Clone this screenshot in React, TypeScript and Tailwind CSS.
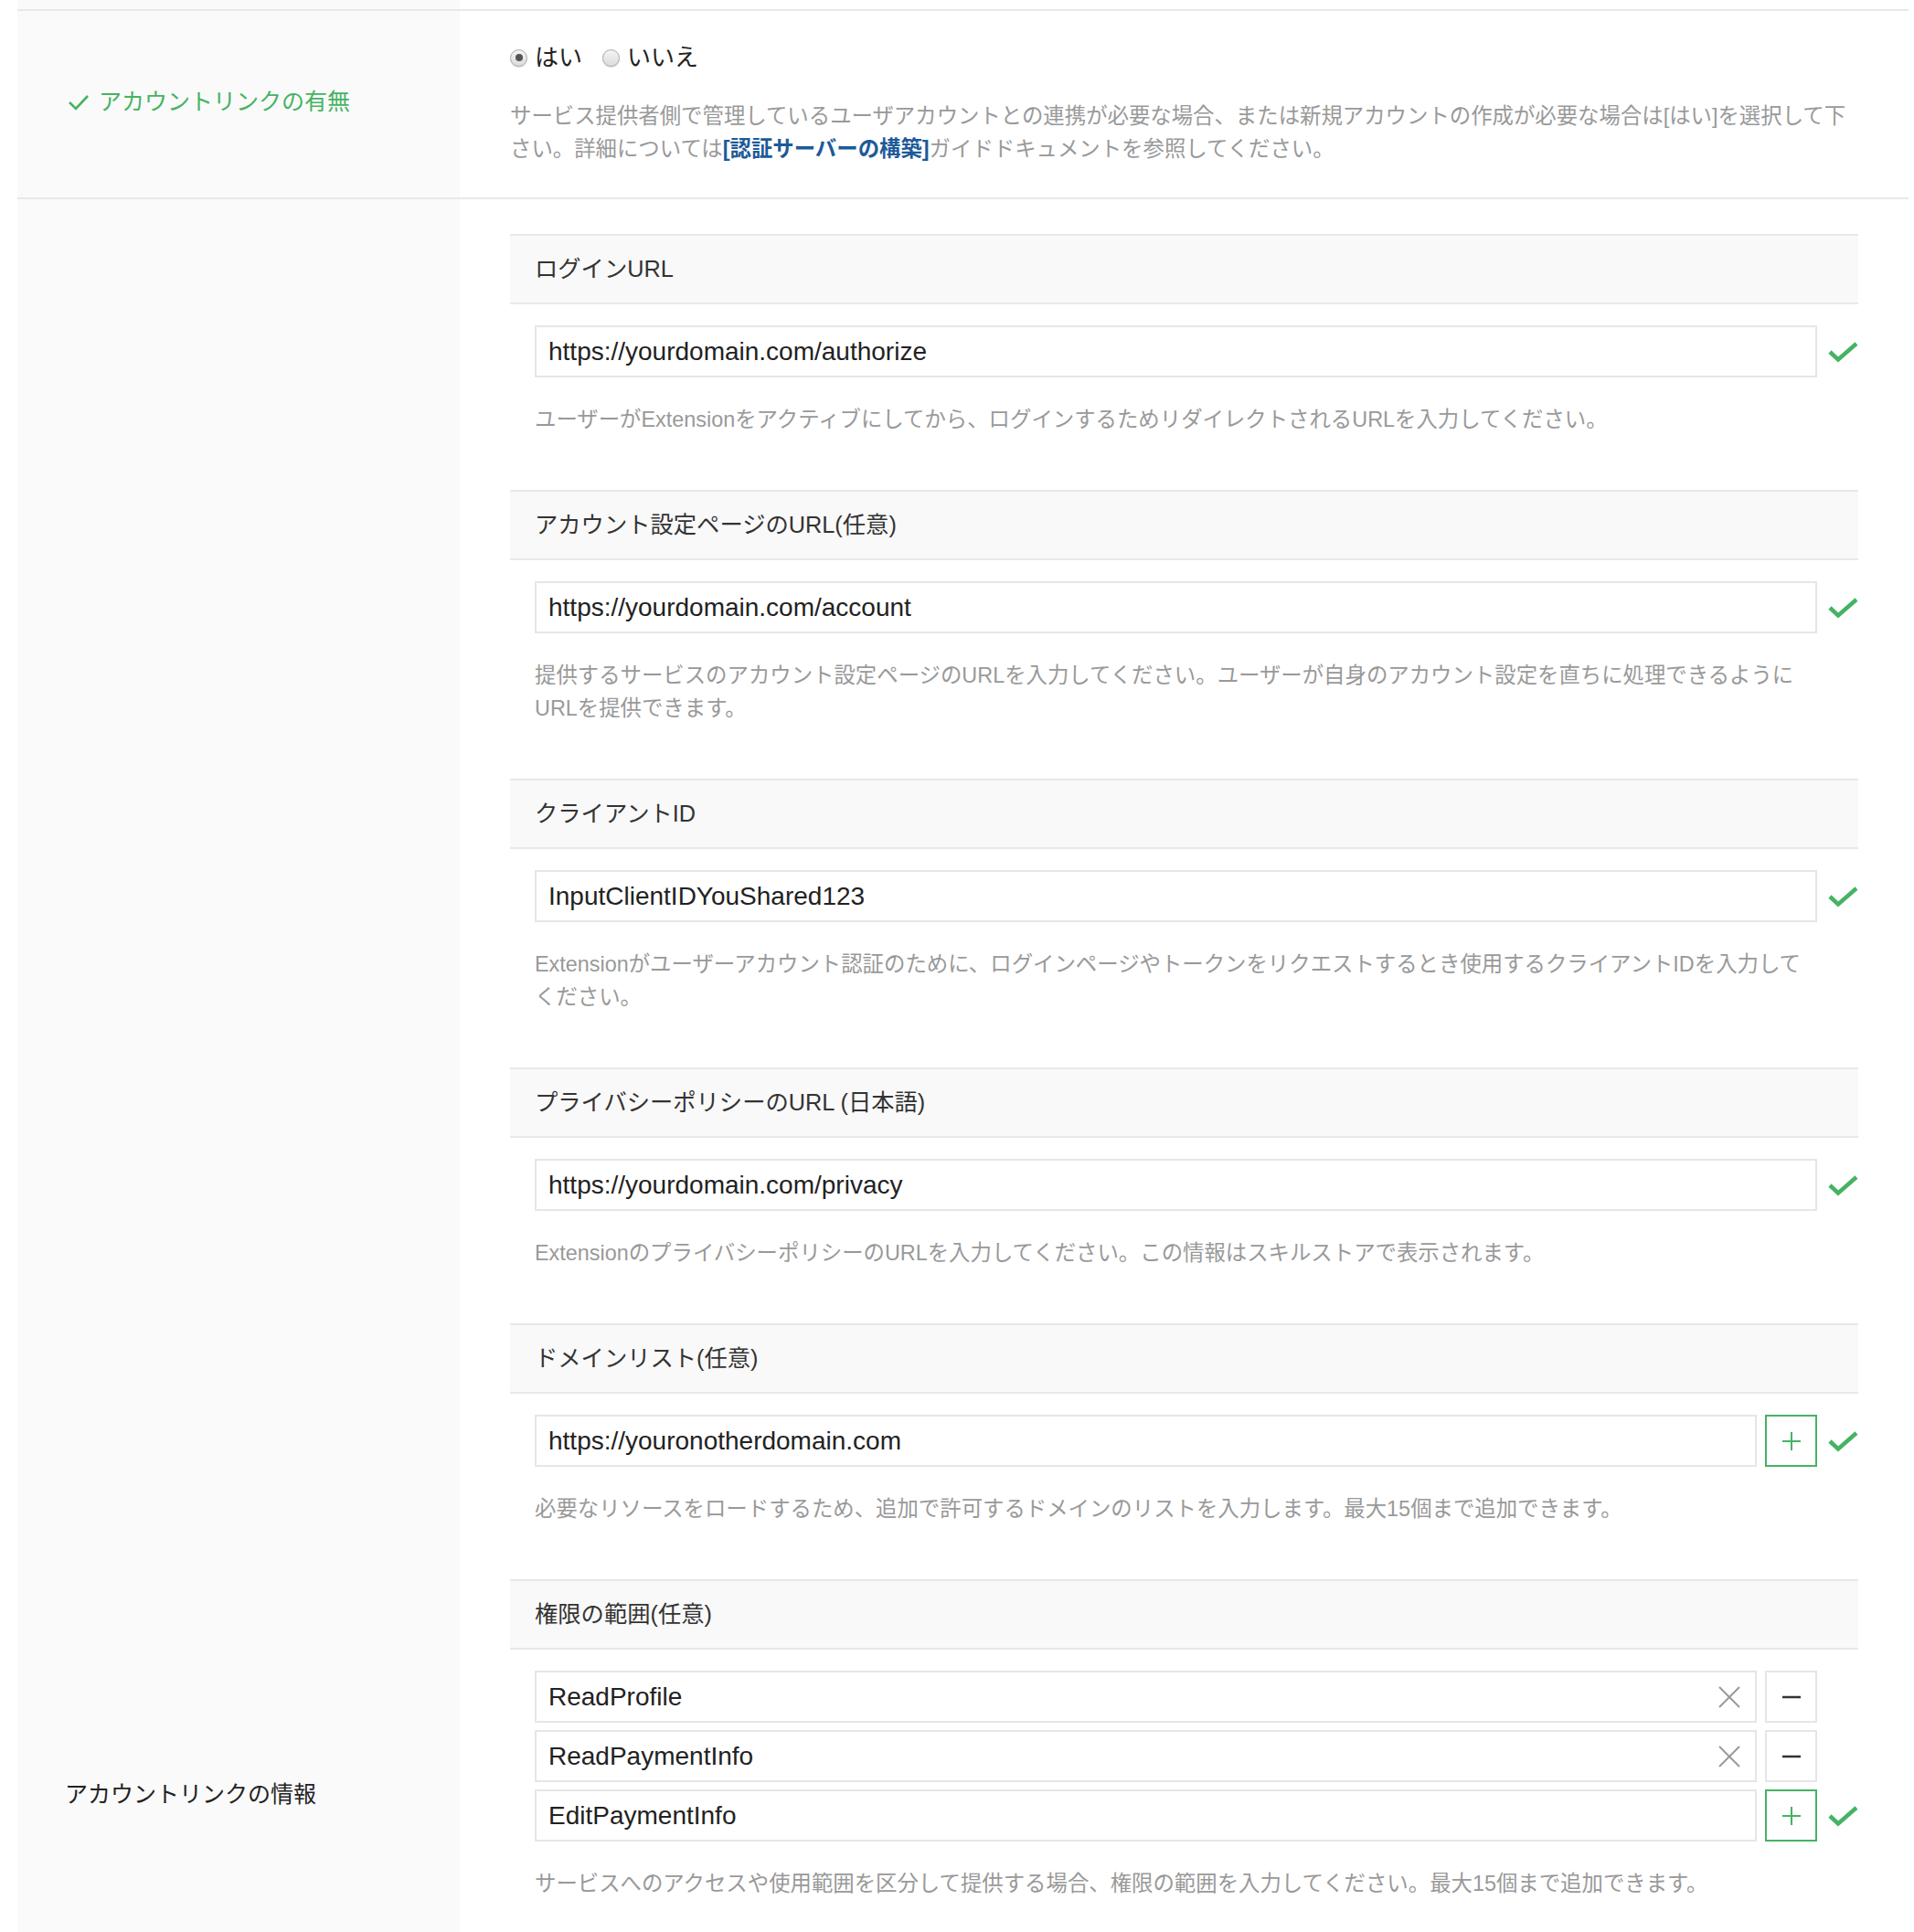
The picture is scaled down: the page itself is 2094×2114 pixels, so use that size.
import type { ReactNode } from 'react';

const GREEN = '#45b363';

function CheckIcon() {
  return (
    <svg width="33" height="24" viewBox="0 0 33 24" fill="none">
      <polyline points="2,12 11,20.5 31,3" stroke={GREEN} strokeWidth="4.5" strokeLinecap="butt" strokeLinejoin="miter" />
    </svg>
  );
}

function XIcon() {
  return (
    <svg width="26" height="26" viewBox="0 0 26 26" fill="none">
      <line x1="2" y1="2" x2="24" y2="24" stroke="#999" strokeWidth="2" />
      <line x1="24" y1="2" x2="2" y2="24" stroke="#999" strokeWidth="2" />
    </svg>
  );
}

function PlusIcon() {
  return (
    <svg width="22" height="22" viewBox="0 0 22 22" fill="none">
      <line x1="11" y1="1" x2="11" y2="21" stroke={GREEN} strokeWidth="2" />
      <line x1="1" y1="11" x2="21" y2="11" stroke={GREEN} strokeWidth="2" />
    </svg>
  );
}

function MinusIcon() {
  return (
    <svg width="22" height="4" viewBox="0 0 22 4" fill="none">
      <line x1="1" y1="2" x2="21" y2="2" stroke="#333" strokeWidth="2.5" />
    </svg>
  );
}

interface FieldProps {
  value: string;
  action?: 'add' | 'remove';
  clear?: boolean;
  check?: boolean;
}

function Field({ value, action, clear, check }: FieldProps) {
  return (
    <div className="flex items-center h-[57px]">
      <div className="flex-1 h-full flex items-center bg-white border-2 border-[#e6e6e6] pl-[13px] pr-[15px] text-[28px] text-[#222]">
        <span className="flex-1">{value}</span>
        {clear && <XIcon />}
      </div>
      {action && (
        <button
          className={`ml-[9px] w-[57px] h-[57px] flex items-center justify-center bg-white border-2 ${
            action === 'add' ? 'border-[#45b363]' : 'border-[#e6e6e6]'
          }`}
        >
          {action === 'add' ? <PlusIcon /> : <MinusIcon />}
        </button>
      )}
      <div className="ml-[12px] w-[33px] flex items-center">{check && <CheckIcon />}</div>
    </div>
  );
}

function Section({ title, help, children }: { title: string; help: ReactNode; children: ReactNode }) {
  return (
    <section className="mb-[59px]">
      <div className="h-[77px] flex items-center pl-[27px] bg-[#f9f9f9] border-y-2 border-[#e8e8e8] text-[25.3px] text-[#333]">
        {title}
      </div>
      <div className="pl-[27px] pt-[23px]">
        {children}
        <p className="mt-[28px] pr-[45px] text-[23.4px] leading-[36px] text-[#999]">{help}</p>
      </div>
    </section>
  );
}

function Radio({ checked, label }: { checked?: boolean; label: string }) {
  return (
    <label className="flex items-center gap-[8px]">
      <span className="w-[19px] h-[19px] rounded-full border border-[#aaa] bg-gradient-to-b from-[#f4f4f4] to-[#dcdcdc] flex items-center justify-center shadow-[0_1px_1px_rgba(0,0,0,0.15)]">
        {checked && <span className="w-[8px] h-[8px] rounded-full bg-[#555]" />}
      </span>
      <span>{label}</span>
    </label>
  );
}

export default function App() {
  return (
    <div className="min-h-screen bg-white font-['Liberation_Sans','Noto_Sans_CJK_JP',sans-serif]">
      <div className="ml-[19px] w-[2069px]">
        {/* tail of the previous row */}
        <div className="flex h-[10px]">
          <div className="w-[484px] bg-[#fafafa]" />
          <div className="flex-1" />
        </div>

        {/* account link yes/no */}
        <div className="flex border-y-2 border-[#e8e8e8]">
          <div className="w-[484px] bg-[#fafafa] flex items-center pl-[55px] pb-[4px]">
            <div className="flex items-center gap-[10px] text-[25px] text-[#45b363]">
              <svg width="24" height="20" viewBox="0 0 24 20" fill="none">
                <polyline points="2,10 9,17 22,3" stroke={GREEN} strokeWidth="2.6" />
              </svg>
              <span>アカウントリンクの有無</span>
            </div>
          </div>
          <div className="flex-1 pl-[55px] pr-[55px] pt-[33px] pb-[35px]">
            <div className="flex items-center gap-[22px] h-[36px] text-[26px] text-[#222]">
              <Radio checked label="はい" />
              <Radio label="いいえ" />
            </div>
            <p className="mt-[28px] text-[23.4px] leading-[36px] text-[#999]">
              サービス提供者側で管理しているユーザアカウントとの連携が必要な場合、または新規アカウントの作成が必要な場合は[はい]を選択して下さい。詳細については
              <a className="font-bold text-[#1d5a98]">[認証サーバーの構築]</a>
              ガイドドキュメントを参照してください。
            </p>
          </div>
        </div>

        {/* account link info */}
        <div className="flex">
          <div className="w-[484px] bg-[#fafafa] pl-[52px] pt-[1727px]">
            <div className="text-[25px] leading-[36px] text-[#222]">アカウントリンクの情報</div>
          </div>
          <div className="flex-1 pl-[55px] pr-[55px] pt-[38px] pb-[40px]">
            <Section
              title="ログインURL"
              help="ユーザーがExtensionをアクティブにしてから、ログインするためリダイレクトされるURLを入力してください。"
            >
              <Field value="https://yourdomain.com/authorize" check />
            </Section>

            <Section
              title="アカウント設定ページのURL(任意)"
              help="提供するサービスのアカウント設定ページのURLを入力してください。ユーザーが自身のアカウント設定を直ちに処理できるようにURLを提供できます。"
            >
              <Field value="https://yourdomain.com/account" check />
            </Section>

            <Section
              title="クライアントID"
              help="Extensionがユーザーアカウント認証のために、ログインページやトークンをリクエストするとき使用するクライアントIDを入力してください。"
            >
              <Field value="InputClientIDYouShared123" check />
            </Section>

            <Section
              title="プライバシーポリシーのURL (日本語)"
              help="ExtensionのプライバシーポリシーのURLを入力してください。この情報はスキルストアで表示されます。"
            >
              <Field value="https://yourdomain.com/privacy" check />
            </Section>

            <Section
              title="ドメインリスト(任意)"
              help="必要なリソースをロードするため、追加で許可するドメインのリストを入力します。最大15個まで追加できます。"
            >
              <Field value="https://youronotherdomain.com" action="add" check />
            </Section>

            <Section
              title="権限の範囲(任意)"
              help="サービスへのアクセスや使用範囲を区分して提供する場合、権限の範囲を入力してください。最大15個まで追加できます。"
            >
              <div className="flex flex-col gap-[8px]">
                <Field value="ReadProfile" clear action="remove" />
                <Field value="ReadPaymentInfo" clear action="remove" />
                <Field value="EditPaymentInfo" action="add" check />
              </div>
            </Section>
          </div>
        </div>
      </div>
    </div>
  );
}
